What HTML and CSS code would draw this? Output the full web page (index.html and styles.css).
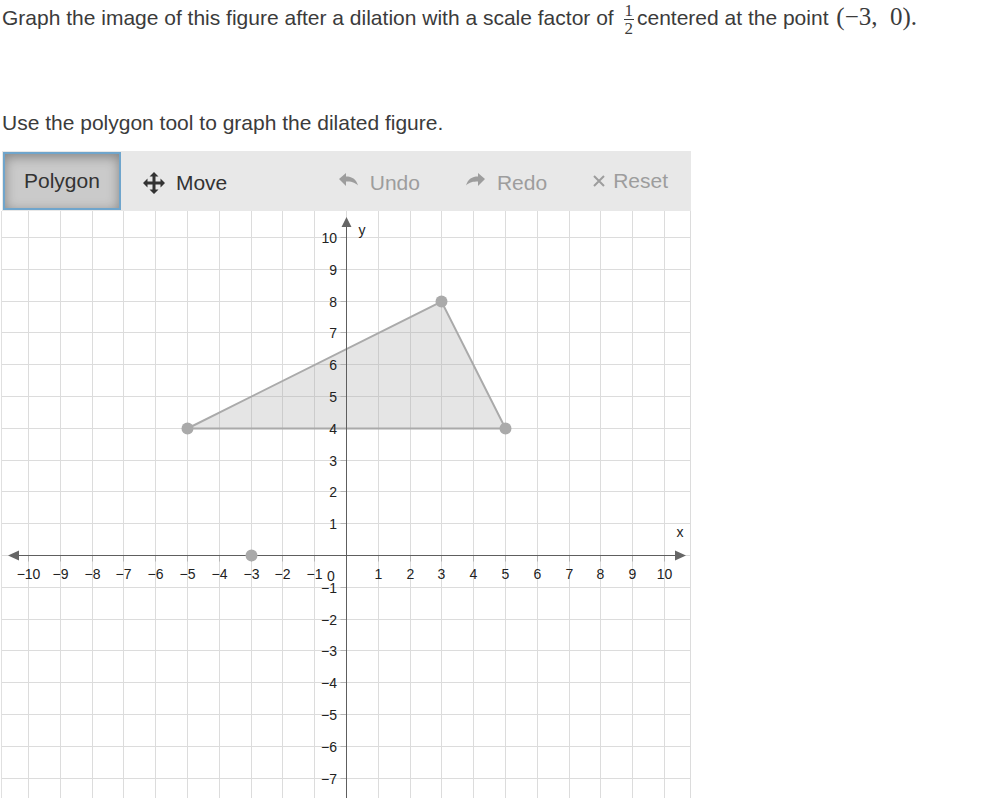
FILE: index.html
```html
<!DOCTYPE html>
<html lang="en">
<head>
    <meta charset="UTF-8">
    <meta name="viewport" content="width=device-width, initial-scale=1.0">
    <title>Dilations</title>
    <link rel="stylesheet" href="styles.css">
</head>

<body>
    <main class="question">
        <p class="prompt">Graph the image of this figure after a dilation with a scale factor of
            <span class="fraction"><span class="numerator">1</span><span class="denominator">2</span></span>centered at the point <span class="math">(−3,&nbsp; 0).</span></p>
        <p class="instruction">Use the polygon tool to graph the dilated figure.</p>

        <div class="graph">
            <div class="toolbar">
                <button type="button" class="tool selected">Polygon</button>
                <button type="button" class="tool with-icon">
                    <svg class="icon" width="22" height="22" viewBox="0 0 22 22" aria-hidden="true">
                        <path d="M11 0L15.500 4.500H12.500V9.500H17.500V6.500L22 11L17.500 15.500V12.500H12.500V17.500H15.500L11 22L6.500 17.500H9.500V12.500H4.500V15.500L0 11L4.500 6.500V9.500H9.500V4.500H6.500Z"/>
                    </svg>
                    Move
                </button>
                <button type="button" class="tool with-icon history undo" disabled>
                    <svg class="icon" width="20" height="16" viewBox="0 0 20 16" aria-hidden="true">
                        <path d="M0 6L7 0V3.500C13 3.500 17 6 19 12.500C15.500 9 12 8.500 7 8.500V13Z"/>
                    </svg>
                    Undo
                </button>
                <button type="button" class="tool with-icon history" disabled>
                    <svg class="icon" width="20" height="16" viewBox="0 0 20 16" aria-hidden="true">
                        <path d="M19 6L12 0V3.500C6 3.500 2 6 0 12.500C3.500 9 7 8.500 12 8.500V13Z"/>
                    </svg>
                    Redo
                </button>
                <button type="button" class="tool reset" disabled>
                    <svg class="icon" width="12" height="12" viewBox="0 0 12 12" aria-hidden="true">
                        <path class="cross" d="M1 1L11 11M11 1L1 11"/>
                    </svg>
                    Reset
                </button>
            </div>

            <div class="board">
                <svg id="plane" viewBox="0 0 689 689" role="img" aria-label="Coordinate plane with a triangle and a point">
                    <g id="grid" class="grid"></g>
                    <g id="ticks" class="ticks"></g>
                    <g id="shape" class="figure"></g>
                    <g class="axes">
                        <path d="M14 344.500H676M344.500 14V676"/>
                        <path class="arrow" d="M6 344.500L17 339.500V349.500ZM684 344.500L673 339.500V349.500ZM344.500 6L339.500 16H349.500ZM344.500 683L339.500 673H349.500Z"/>
                    </g>
                    <g id="labels" class="labels">
                        <text x="360" y="24">y</text>
                        <text x="678" y="326">x</text>
                        <text x="329" y="370">0</text>
                    </g>
                    <g id="points" class="figure"></g>
                </svg>
            </div>
        </div>
    </main>
    <script src="graph.js"></script>
</body>
</html>
```
FILE: styles.css
```css
body {
    margin: 0;
    background-color: #fff;
    color: #3b3b3b;
    font-family: "Liberation Sans", Arial, sans-serif;
    font-size: 21px;
}

.question {
    display: flex;
    flex-direction: column;
    height: 100vh;
    overflow: hidden;
    padding: 0 2px;
    box-sizing: border-box;
}

.prompt,
.instruction {
    margin: 0;
    line-height: 36px;
}

.prompt {
    margin-bottom: 68px;
}

.instruction {
    margin-bottom: 10px;
}

.math,
.fraction {
    font-family: "Liberation Serif", "Times New Roman", serif;
}

.math {
    margin-left: 2px;
    font-size: 25px;
    line-height: 24px;
}

.fraction {
    display: inline-flex;
    flex-direction: column;
    margin: 0 3px 0 4px;
    font-size: 17px;
    line-height: 17px;
    text-align: center;
    vertical-align: middle;
}

.numerator {
    padding: 0 1px;
    border-bottom: 1px solid #3b3b3b;
}

.graph {
    flex: 1;
    display: flex;
    flex-direction: column;
    min-height: 0;
    max-width: 689px;
}

.toolbar {
    display: flex;
    flex: none;
    height: 60px;
    padding: 1px;
    box-sizing: border-box;
    background-color: #e8e8e8;
}

.tool {
    display: flex;
    align-items: center;
    gap: 11px;
    padding: 0 22px;
    border: none;
    background: none;
    color: #333;
    font-family: inherit;
    font-size: 21px;
    cursor: pointer;
}

.tool:disabled {
    color: #9d9d9d;
    cursor: default;
}

.selected {
    padding: 0 19px;
    border: 2px solid #6fa5cc;
    background-color: #cacaca;
    box-shadow: inset 0 3px 12px rgba(0, 0, 0, 0.35);
}

.with-icon {
    padding-top: 4px;
}

.history {
    padding-right: 24px;
}

.undo {
    margin-left: auto;
}

.reset {
    gap: 8px;
}

.icon {
    fill: currentColor;
}

.history .icon {
    margin-bottom: 4px;
}

.cross {
    fill: none;
    stroke: currentColor;
    stroke-width: 2;
}

.board {
    flex: 1;
    min-height: 0;
    overflow: hidden;
    border-left: 1px solid #e0e0e0;
    margin-left: -1px;
}

.board svg {
    display: block;
    width: 100%;
}

.grid {
    stroke: #dcdcdc;
}

.ticks {
    stroke: #b5b5b5;
}

.axes {
    stroke: #5e5e5e;
}

.arrow {
    fill: #666;
    stroke: none;
}

.labels {
    fill: #222;
    font-size: 14px;
    text-anchor: middle;
}

.labels .y-label {
    text-anchor: end;
}

.figure polygon {
    fill: rgba(170, 170, 170, 0.3);
    stroke: #aaa;
    stroke-width: 2;
}

.figure circle {
    fill: #aaa;
}
```
FILE: graph.js
```javascript
var ORIGIN = 344.5;
var UNIT = 31.8;
var SIZE = 689;

function toX(x) {
    return Math.round(ORIGIN + x * UNIT - 0.5) + 0.5;
}

function toY(y) {
    return Math.round(ORIGIN - y * UNIT - 0.5) + 0.5;
}

function add(parentId, name, attrs, text) {
    var el = document.createElementNS("http://www.w3.org/2000/svg", name);
    for (var key in attrs) {
        el.setAttribute(key, attrs[key]);
    }
    if (text !== undefined) {
        el.textContent = text;
    }
    document.getElementById(parentId).appendChild(el);
}

// grid lines, ticks and numbers
for (var i = -10; i <= 10; i++) {
    var x = toX(i);
    var y = toY(i);
    var label = String(i).replace("-", "−");

    add("grid", "line", { x1: x, y1: 0, x2: x, y2: SIZE });
    add("grid", "line", { x1: 0, y1: y, x2: SIZE, y2: y });

    if (i !== 0) {
        add("ticks", "line", { x1: x, y1: ORIGIN, x2: x, y2: ORIGIN + 6 });
        add("ticks", "line", { x1: ORIGIN - 6, y1: y, x2: ORIGIN, y2: y });
        add("labels", "text", { x: x, y: 368 }, label);
        add("labels", "text", { x: 335, y: y + 5, "class": "y-label" }, label);
    }
}
add("grid", "line", { x1: SIZE - 0.5, y1: 0, x2: SIZE - 0.5, y2: SIZE });

// the given triangle and the center of dilation
var triangle = [[-5, 4], [3, 8], [5, 4]];
var corners = triangle.map(function (p) {
    return toX(p[0]) + "," + toY(p[1]);
});
add("shape", "polygon", { points: corners.join(" ") });

triangle.concat([[-3, 0]]).forEach(function (p) {
    add("points", "circle", { cx: toX(p[0]), cy: toY(p[1]), r: 6 });
});
```
